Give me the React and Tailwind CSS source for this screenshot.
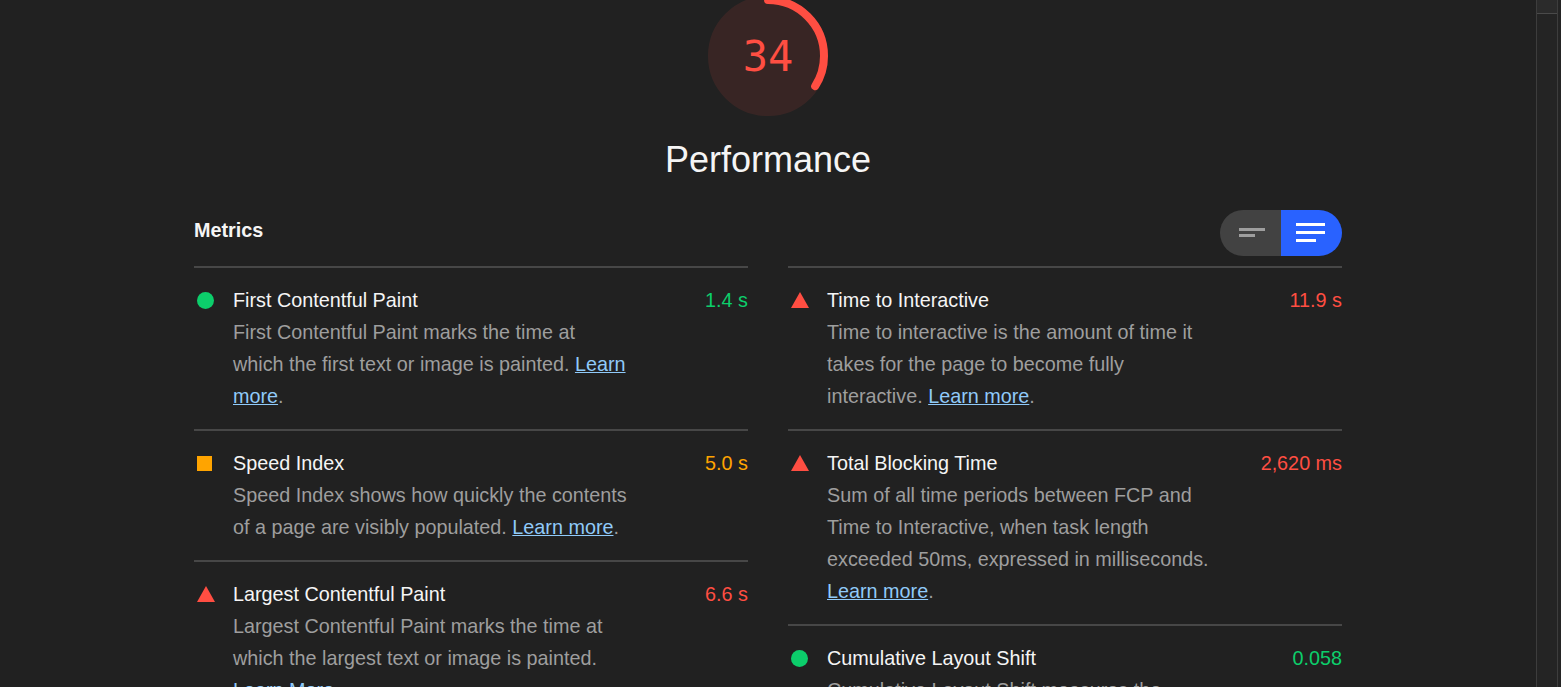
import React from 'react';

const leftMetrics = [
  {
    icon: 'pass',
    title: 'First Contentful Paint',
    value: '1.4 s',
    desc: 'First Contentful Paint marks the time at which the first text or image is painted.',
    link: 'Learn more',
    end: '.'
  },
  {
    icon: 'average',
    title: 'Speed Index',
    value: '5.0 s',
    desc: 'Speed Index shows how quickly the contents of a page are visibly populated.',
    link: 'Learn more',
    end: '.'
  },
  {
    icon: 'fail',
    title: 'Largest Contentful Paint',
    value: '6.6 s',
    desc: 'Largest Contentful Paint marks the time at which the largest text or image is painted.',
    link: 'Learn More',
    end: ''
  }
];

const rightMetrics = [
  {
    icon: 'fail',
    title: 'Time to Interactive',
    value: '11.9 s',
    desc: 'Time to interactive is the amount of time it takes for the page to become fully interactive.',
    link: 'Learn more',
    end: '.'
  },
  {
    icon: 'fail',
    title: 'Total Blocking Time',
    value: '2,620 ms',
    desc: 'Sum of all time periods between FCP and Time to Interactive, when task length exceeded 50ms, expressed in milliseconds.',
    link: 'Learn more',
    end: '.'
  },
  {
    icon: 'pass',
    title: 'Cumulative Layout Shift',
    value: '0.058',
    desc: 'Cumulative Layout Shift measures the movement of visible elements within the viewport.',
    link: 'Learn more',
    end: '.'
  }
];

const valueColors = {
  pass: 'text-[#0cce6b]',
  average: 'text-[#ffa400]',
  fail: 'text-[#ff4e42]'
};

const MetricIcon = ({ type }) => {
  if (type === 'pass') {
    return <span className="block w-[17px] h-[17px] rounded-full bg-[#0cce6b]" />;
  }
  if (type === 'average') {
    return <span className="block w-[15px] h-[15px] bg-[#ffa400]" />;
  }
  return (
    <svg width="18" height="16" viewBox="0 0 18 16">
      <polygon points="9,0 18,16 0,16" fill="#ff4e42" />
    </svg>
  );
};

const Metric = ({ metric }) => (
  <div className="flex border-t-2 border-[#474747] pt-4 pb-[17px]">
    <div className="w-[39px] shrink-0 h-8 flex items-center pl-[3px]">
      <MetricIcon type={metric.icon} />
    </div>
    <div className="flex-1">
      <div className="flex justify-between leading-8">
        <span className="text-[#f5f5f5]">{metric.title}</span>
        <span className={valueColors[metric.icon]}>{metric.value}</span>
      </div>
      <div className="max-w-[395px] leading-8 text-[#9e9e9e]">
        {metric.desc}{' '}
        <a className="text-[#90caf9] underline">{metric.link}</a>
        {metric.end}
      </div>
    </div>
  </div>
);

const Gauge = ({ score }) => {
  const circumference = 2 * Math.PI * 56;
  const arc = (score / 100) * circumference;
  return (
    <div className="relative w-[120px] h-[120px] -mt-1">
      <svg width="120" height="120" viewBox="0 0 120 120">
        <circle cx="60" cy="60" r="56" fill="#ff4e42" stroke="#ff4e42" strokeWidth="8" opacity="0.1" />
        <circle
          cx="60"
          cy="60"
          r="56"
          fill="none"
          stroke="#ff4e42"
          strokeWidth="8"
          strokeLinecap="round"
          strokeDasharray={`${arc} ${circumference}`}
          transform="rotate(-90 60 60)"
        />
      </svg>
      <div className="absolute inset-0 flex items-center justify-center font-['DejaVu_Sans_Mono',monospace] text-[42px] text-[#ff4e42]">
        {score}
      </div>
    </div>
  );
};

const ViewToggle = () => (
  <div className="flex h-[46px] w-[122px] rounded-full overflow-hidden">
    <div className="w-[61px] bg-[#424242] flex items-center justify-center pl-[2px]">
      <svg width="26" height="10" viewBox="0 0 26 10">
        <rect x="0" y="0" width="26" height="3" fill="#9e9e9e" />
        <rect x="0" y="6" width="16" height="3" fill="#9e9e9e" />
      </svg>
    </div>
    <div className="w-[61px] bg-[#2962ff] flex items-center justify-center pr-[3px]">
      <svg width="29" height="20" viewBox="0 0 29 20">
        <rect x="0" y="0" width="29" height="3" fill="#ffffff" />
        <rect x="0" y="8" width="29" height="3" fill="#ffffff" />
        <rect x="0" y="16" width="20" height="3" fill="#ffffff" />
      </svg>
    </div>
  </div>
);

const App = () => {
  return (
    <div className="flex h-[687px] overflow-hidden bg-[#212121] font-['Liberation_Sans',Arial,sans-serif] text-[19.8px]">
      <div className="flex-1 min-w-0">
        <div className="flex flex-col items-center">
          <Gauge score={34} />
          <div className="mt-6 text-[36px] leading-[40px] text-[#f5f5f5]">Performance</div>
        </div>

        <div className="w-[1148px] mx-auto mt-[30px]">
          <div className="flex justify-between items-center h-[46px] mb-[10px]">
            <h2 className="font-bold text-[#f5f5f5] pb-[5px]">Metrics</h2>
            <ViewToggle />
          </div>

          <div className="flex gap-10">
            <div className="flex-1">
              {leftMetrics.map((m) => (
                <Metric key={m.title} metric={m} />
              ))}
            </div>
            <div className="flex-1">
              {rightMetrics.map((m) => (
                <Metric key={m.title} metric={m} />
              ))}
            </div>
          </div>
        </div>
      </div>

      {/* scrollbar */}
      <div className="w-[25px] shrink-0 flex bg-[#242424] border-l border-[#3d3d3d]">
        <div className="w-[21px] border-r border-[#3d3d3d]">
          <div className="h-[14px] bg-[#2b2b2b] border-b border-[#4a4a4a]" />
        </div>
      </div>
    </div>
  );
};

export default App;
